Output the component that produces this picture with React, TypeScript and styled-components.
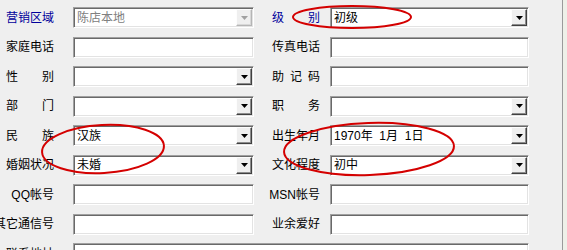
import React from "react";
import styled, { createGlobalStyle, css } from "styled-components";

const Global = createGlobalStyle`
  html, body { margin: 0; padding: 0; background: #eef0e8; overflow: hidden; }
  body { font-family: "Liberation Sans", "Noto Sans CJK SC", sans-serif; font-size: 12px; color: #000; }
`;

const Page = styled.div`
  position: relative;
  width: 562px;
  height: 250px;
  background: #efefef;
  border-right: 1px solid #9a9a9a;
  overflow: hidden;
`;

const Form = styled.div`
  display: grid;
  grid-template-columns: 54px 200px 66px 209px;
  grid-auto-rows: 21px;
  row-gap: 8.5px;
  padding-top: 7px;
  align-items: center;
`;

const Label = styled.div<{ $blue?: boolean; $spread?: boolean }>`
  justify-self: end;
  white-space: nowrap;
  font-size: 12px;
  line-height: 14px;
  color: ${(p) => (p.$blue ? "#00009c" : "#000")};
  ${(p) =>
    p.$spread &&
    css`
      width: 48px;
      display: flex;
      justify-content: space-between;
    `}
`;

const Field = styled.div<{ $w: number; $span?: boolean }>`
  justify-self: end;
  width: ${(p) => p.$w}px;
  height: 21px;
  box-sizing: border-box;
  display: flex;
  align-items: center;
  background: #fff;
  border-style: solid;
  border-width: 1px;
  border-color: #a0a0a0 #fff #fff #a0a0a0;
  box-shadow: inset 1px 1px 0 #696969, inset -1px -1px 0 #e3e3e3;
  ${(p) => p.$span && css`grid-column: 2 / 5;`}
`;

const Value = styled.span<{ $disabled?: boolean }>`
  flex: 1;
  padding-left: 3px;
  white-space: pre;
  font-size: 12px;
  line-height: 14px;
  color: ${(p) => (p.$disabled ? "#808080" : "#000")};
`;

const DropButton = styled.div<{ $disabled?: boolean }>`
  width: 16px;
  height: 17px;
  margin-right: 1px;
  box-sizing: border-box;
  display: flex;
  align-items: center;
  justify-content: center;
  background: #efefef;
  border-style: solid;
  border-width: 1px;
  border-color: ${(p) => (p.$disabled ? "#fdfdfd #b5b5b5 #b5b5b5 #fdfdfd" : "#fdfdfd #404040 #404040 #fdfdfd")};
  box-shadow: ${(p) => (p.$disabled ? "inset -1px -1px 0 #d8d8d8" : "inset -1px -1px 0 #8c8c8c")};
`;

const Overlay = styled.svg`
  position: absolute;
  left: 0;
  top: 0;
  pointer-events: none;
`;

const Arrow = ({ disabled }: { disabled?: boolean }) => (
  <svg width="7" height="4" viewBox="0 0 7 4">
    <polygon points="0,0 7,0 3.5,4" fill={disabled ? "#a0a0a0" : "#000"} />
  </svg>
);

type Cell = {
  label: string;
  spread?: boolean;
  blue?: boolean;
  kind: "text" | "select";
  value?: string;
  disabled?: boolean;
};

const LabelText = ({ c }: { c: Cell }) =>
  c.spread ? (
    <Label $spread $blue={c.blue}>
      {c.label.split("").map((ch, i) => (
        <span key={i}>{ch}</span>
      ))}
    </Label>
  ) : (
    <Label $blue={c.blue}>{c.label}</Label>
  );

const Input = ({ c, w, span }: { c: Cell; w: number; span?: boolean }) => (
  <Field $w={w} $span={span}>
    <Value $disabled={c.disabled}>{c.value ?? ""}</Value>
    {c.kind === "select" && (
      <DropButton $disabled={c.disabled}>
        <Arrow disabled={c.disabled} />
      </DropButton>
    )}
  </Field>
);

const rows: [Cell, Cell][] = [
  [
    { label: "营销区域", blue: true, kind: "select", value: "陈店本地", disabled: true },
    { label: "级别", spread: true, blue: true, kind: "select", value: "初级" },
  ],
  [
    { label: "家庭电话", kind: "text" },
    { label: "传真电话", kind: "text" },
  ],
  [
    { label: "性别", spread: true, kind: "select" },
    { label: "助记码", spread: true, kind: "text" },
  ],
  [
    { label: "部门", spread: true, kind: "select" },
    { label: "职务", spread: true, kind: "select" },
  ],
  [
    { label: "民族", spread: true, kind: "select", value: "汉族" },
    { label: "出生年月", kind: "select", value: "1970年  1月  1日" },
  ],
  [
    { label: "婚姻状况", kind: "select", value: "未婚" },
    { label: "文化程度", kind: "select", value: "初中" },
  ],
  [
    { label: "QQ帐号", kind: "text" },
    { label: "MSN帐号", kind: "text" },
  ],
  [
    { label: "其它通信号", kind: "text" },
    { label: "业余爱好", kind: "text" },
  ],
];

export default function App() {
  return (
    <Page>
      <Global />
      <Form>
        {rows.map(([l, r], i) => (
          <React.Fragment key={i}>
            <LabelText c={l} />
            <Input c={l} w={181} />
            <LabelText c={r} />
            <Input c={r} w={199} />
          </React.Fragment>
        ))}
        <LabelText c={{ label: "联系地址", kind: "text" }} />
        <Input c={{ label: "联系地址", kind: "text" }} w={456} span />
      </Form>
      <Overlay width="562" height="250" viewBox="0 0 562 250">
        <g fill="none" stroke="#d40000" strokeWidth="2">
          <ellipse cx="352" cy="17" rx="59" ry="11" />
          <ellipse cx="103" cy="149" rx="61" ry="24" transform="rotate(-3 103 149)" />
          <ellipse cx="369" cy="149" rx="85" ry="26" transform="rotate(-2 369 149)" />
        </g>
      </Overlay>
    </Page>
  );
}
